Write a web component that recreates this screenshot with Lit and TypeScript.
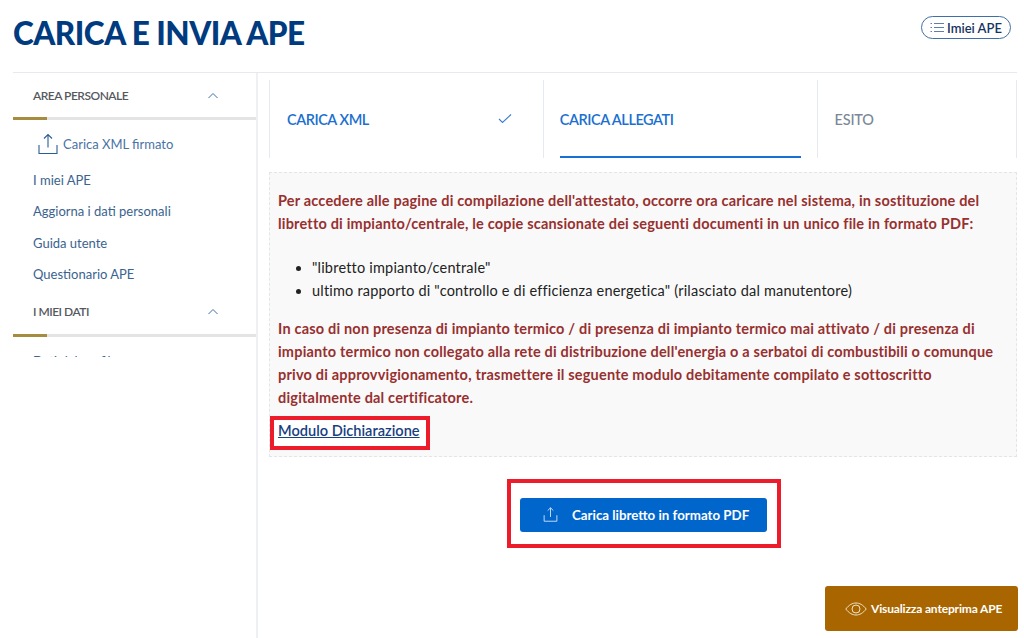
import { LitElement, html, css } from "lit";
import { customElement } from "lit/decorators.js";

const upload = (size: number, sw: number) => html`<svg width=${size} height=${size} viewBox="0 0 24 24" fill="none" stroke="currentColor" stroke-width=${sw}><path d="M12 15.500V2.500M8 6.500l4-4 4 4M3 13v8.500h18V13"/></svg>`;
const chev = html`<svg width="12" height="7" viewBox="0 0 12 7" fill="none" stroke="#3f6fa8" stroke-width="1"><path d="M1.500 6L6 1.500 10.500 6"/></svg>`;

@customElement("app-root")
export class AppRoot extends LitElement {
  static styles = css`
    :host { display: block; width: 1024px; height: 638px; overflow: hidden; background: #fff; font-family: "Lato", "Roboto", sans-serif; box-sizing: border-box; padding: 0 7px 0 13px; position: relative; }
    * { box-sizing: border-box; }
    .head { height: 73px; border-bottom: 1px solid #e6e9f2; display: flex; align-items: center; justify-content: space-between; padding-bottom: 6px; }
    h1 { margin: 0; font-size: 31.500px; font-weight: 900; color: #003b80; letter-spacing: -0.5px; line-height: 40px; }
    .pill { display: flex; align-items: center; gap: 3px; height: 23px; width: 90px; margin-right: 6px; margin-top: -11px; justify-content: center; border: 1.500px solid #3f6fa8; border-radius: 12px; color: #17345f; font-size: 13px; font-weight: 600; }
    .pill svg { color: #5f7fa8; }
    .body { display: flex; }
    .side { width: 245px; height: 565px; border-right: 2px solid #eef0f4; flex: none; }
    .clip { height: 284px; overflow: hidden; }
    .sec { height: 47px; display: flex; align-items: center; justify-content: space-between; padding: 0 37px 0 20px; font-size: 12px; letter-spacing: -0.5px; font-weight: 600; color: #55595f; border-bottom: 3px solid #e4e4e4; position: relative; }
    .sec::after { content: ""; position: absolute; left: 0; bottom: -3px; width: 34px; height: 3px; background: #a58c3f; }
    .first { display: flex; align-items: center; gap: 3px; padding: 0 0 0 23px; height: 48px; }
    .first svg { color: #2c5c94; }
    .item { color: #3a638f; font-size: 13px; line-height: 20px; padding-left: 20px; }
    .items { display: flex; flex-direction: column; gap: 11.333px; margin-top: 2px; }
    .first .lbl { color: #4a72a3; font-size: 13px; }
    .list { padding-bottom: 6px; }
    .sliver { padding: 16px 0 0 20px; font-size: 13px; color: #3a638f; }
    .main { flex: 1; padding: 7px 0 0 11px; min-width: 0; }
    .tabs { display: flex; height: 78px; border-right: 1px solid #e6e9f2; }
    .tab { width: 273.800px; border-left: 1px solid #e6e9f2; padding: 0 17px; position: relative; font-size: 14.500px; letter-spacing: -0.45px; font-weight: 600; color: #1a6fd0; display: flex; align-items: center; justify-content: space-between; }
    .tab.esito { width: 199px; color: #7b8798; font-weight: 500; letter-spacing: -0.2px; }
    .tab.active { padding-left: 16px; }
    .tab.active::after { content: ""; position: absolute; left: 16px; right: 16px; bottom: 0; height: 2px; background: #1a6fd0; }
    .tab svg { margin-right: 14px; }
    .box { margin-top: 14px; height: 285px; border: 1px dashed #e3e5e8; background: #f9f9f9; padding: 16px 8px 0; color: #97302f; font-size: 14.500px; font-weight: 700; line-height: 23px; }
    .box p { margin: 0; letter-spacing: .19px; }
    ul { margin: 21px 0 15px; padding: 0 0 0 34px; color: #222; font-weight: 400; font-size: 14.500px; line-height: 23px; letter-spacing: .2px; }
    .modbox { display: inline-block; border: 4px solid #ed1c2b; background: #fff; margin: 7px 0 0 -8px; height: 34px; width: 160px; padding: 0 0 0 4px; line-height: 22px; white-space: nowrap; }
    .modbox a { color: #17407f; font-weight: 600; text-decoration: underline; font-size: 14.600px; }
    .act { display: flex; justify-content: flex-start; margin-top: 22px; padding-left: 238px; }
    .actbox { border: 4px solid #ed1c2b; padding: 15px 9px 0; height: 69px; width: 274px; flex: none; }
    .btn { background: #0066cc; border-radius: 3px; height: 33.500px; width: 247px; color: #fff; font-size: 13.300px; font-weight: 700; display: flex; align-items: center; padding-left: 22px; gap: 13px; }
    .btn svg { color: #cfe2f5; }
    .prev { position: absolute; right: 6px; bottom: 7px; width: 193px; height: 45px; background: #a96500; border-radius: 3px; color: #fff; font-size: 12px; letter-spacing: -0.15px; font-weight: 700; display: flex; align-items: center; padding-left: 20px; gap: 4px; }
  `;
  render() {
    return html`
      <div class="head">
        <h1>CARICA E INVIA APE</h1>
        <div class="pill">
          <svg width="14" height="11" viewBox="0 0 14 11" fill="none" stroke="currentColor" stroke-width="1"><path d="M4 1.500h10M4 5.500h10M4 9.500h10M0.500 1.500h1.500M0.500 5.500h1.500M0.500 9.500h1.500"/></svg>
          Imiei APE
        </div>
      </div>
      <div class="body">
        <aside class="side">
          <div class="clip">
            <div class="sec"><span>AREA PERSONALE</span>${chev}</div>
            <div class="list">
              <div class="first">${upload(24, 1.1)}<span class="lbl">Carica XML firmato</span></div>
              <div class="items">
                <div class="item">I miei APE</div>
                <div class="item">Aggiorna i dati personali</div>
                <div class="item">Guida utente</div>
                <div class="item">Questionario APE</div>
              </div>
            </div>
            <div class="sec"><span>I MIEI DATI</span>${chev}</div>
            <div class="sliver">Dati del profilo</div>
          </div>
        </aside>
        <main class="main">
          <div class="tabs">
            <div class="tab"><span>CARICA XML</span>
              <svg width="14" height="10" viewBox="0 0 14 10" fill="none" stroke="#3a7fd0" stroke-width="1.100"><path d="M1 5l3.500 3.500 8.500-8"/></svg></div>
            <div class="tab active"><span>CARICA ALLEGATI</span></div>
            <div class="tab esito"><span>ESITO</span></div>
          </div>
          <div class="box">
            <p>Per accedere alle pagine di compilazione dell'attestato, occorre ora caricare nel sistema, in sostituzione del libretto di impianto/centrale, le copie scansionate dei seguenti documenti in un unico file in formato PDF:</p>
            <ul>
              <li>"libretto impianto/centrale"</li>
              <li>ultimo rapporto di "controllo e di efficienza energetica" (rilasciato dal manutentore)</li>
            </ul>
            <p>In caso di non presenza di impianto termico / di presenza di impianto termico mai attivato / di presenza di impianto termico non collegato alla rete di distribuzione dell'energia o a serbatoi di combustibili o comunque privo di approvvigionamento, trasmettere il seguente modulo debitamente compilato e sottoscritto digitalmente dal certificatore.</p>
            <div class="modbox"><a href="#">Modulo Dichiarazione</a></div>
          </div>
          <div class="act">
            <div class="actbox">
              <div class="btn">${upload(17, 1.3)}<span>Carica libretto in formato PDF</span></div>
            </div>
          </div>
        </main>
      </div>
      <div class="prev">
        <svg width="22" height="14" viewBox="0 0 22 14" fill="none" stroke="#f3e3c8" stroke-width="1"><path d="M.8 7C4 2.800 7.500 1 11 1s7 1.800 10.200 6C18 11.200 14.500 13 11 13S4 11.200.8 7z"/><circle cx="11" cy="7" r="4"/></svg>
        <span>Visualizza anteprima APE</span>
      </div>
    `;
  }
}
